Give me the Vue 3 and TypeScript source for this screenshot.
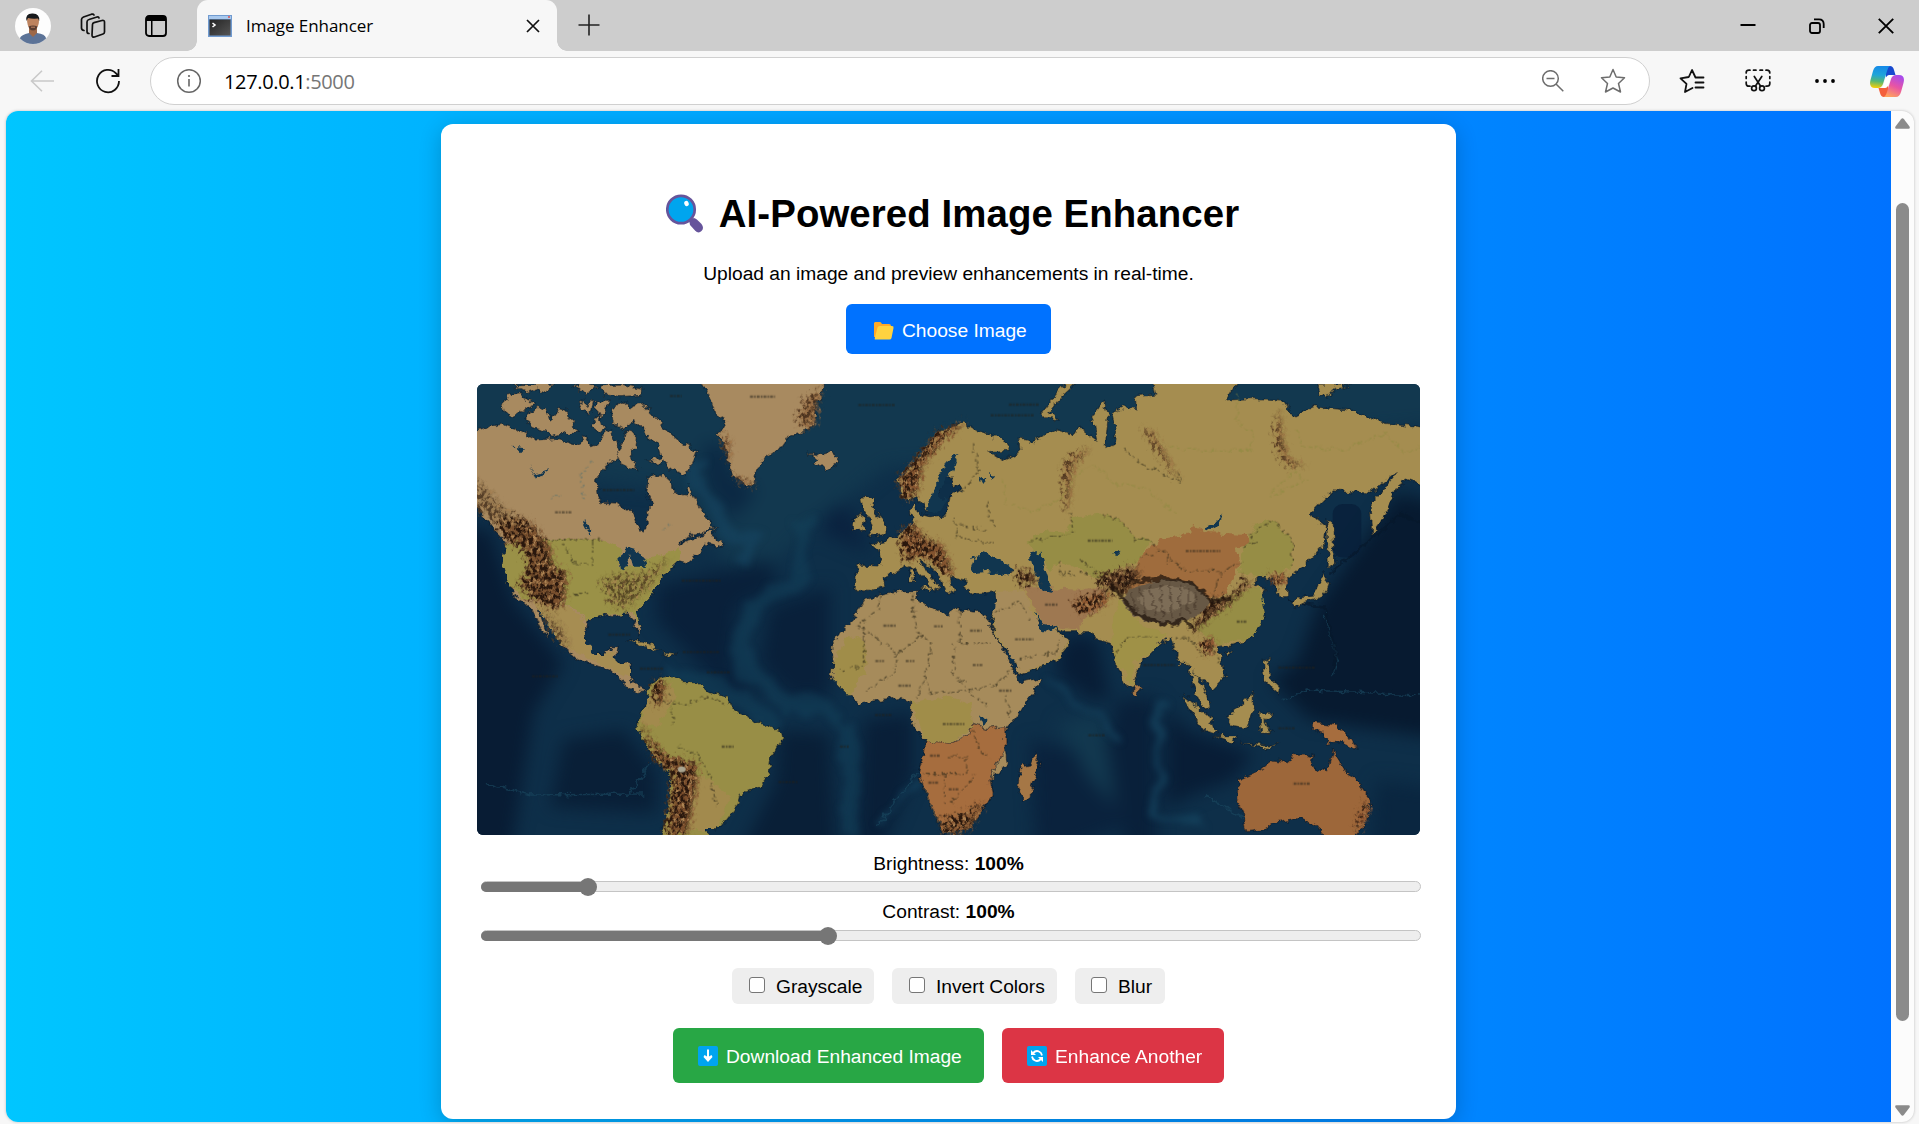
<script setup lang="ts">
import { ref } from 'vue'

interface Slider {
  label: string
  value: number
  fill: number
}

const sliders: Slider[] = [
  { label: 'Brightness', value: 100, fill: 107 },
  { label: 'Contrast', value: 100, fill: 347 },
]
const gray = ref(false)
const invert = ref(false)
const blur = ref(false)

const arctic: string[] = [
  '100,80 112,45 150,38 165,60 195,70 160,92 130,112 105,102',
  '165,105 200,82 230,88 240,120 262,85 290,92 300,118 325,160 285,160 240,172 225,150 190,140 165,120',
  '325,70 345,55 350,75 372,58 362,105 335,92',
  '378,62 418,64 410,85 395,112 378,95',
  '365,140 385,100 402,150 385,155',
  '125,14 250,12 225,40 205,25 170,38',
  '305,18 350,12 380,20 345,45 325,25',
  '388,14 450,12 515,25 512,46 450,50 405,45',
  '425,85 460,65 480,80 515,70 545,100 580,140 630,185 682,215 670,245 650,285 600,270 585,240 560,250 532,240 575,230 565,195 535,180 520,145 490,125 460,145 428,125',
  '465,155 500,160 495,200 480,225 505,268 475,262 450,250 440,215 460,190',
  '1015,220 1040,240 1032,255 1070,270 1100,252 1105,230 1085,215 1050,225',
]

const mapMarks: [number, number, number][] = [
  [840, 50, 75], [600, 48, 35], [1165, 75, 110], [255, 397, 52], [398, 330, 95], [635, 602, 120],
  [186, 889, 78], [638, 816, 110], [755, 1100, 36], [1240, 737, 40], [1392, 739, 26], [1216, 843, 26],
  [1307, 843, 26], [1285, 917, 38], [1380, 1127, 30], [1375, 1208, 30], [1617, 74, 90], [1562, 106, 130],
  [1853, 482, 74], [2147, 513, 104], [1635, 778, 55], [1500, 752, 35], [1508, 855, 32], [1587, 932, 38],
  [1418, 1032, 65], [1436, 1228, 32], [2470, 1211, 50], [2020, 855, 95], [2425, 863, 110], [1855, 1066, 50],
  [510, 866, 70], [710, 877, 72], [415, 764, 65], [1725, 674, 40], [2300, 725, 32], [2425, 1045, 50],
  [1110, 1100, 26], [925, 1206, 60], [1215, 1005, 50],
]
</script>

<template>
  <div class="browser">
    <header class="tabs">
      <svg class="avatar" width="36" height="36" viewBox="0 0 36 36">
        <defs><clipPath id="face"><circle cx="18" cy="18" r="18" /></clipPath></defs>
        <g clip-path="url(#face)">
          <rect width="36" height="36" fill="#fdfdfd" />
          <path d="M5 36V30Q6 27 14 25H22Q30 26 31 30V36Z" fill="#5c7397" />
          <path d="M14 20V25L18 29L22 25V20Z" fill="#9d6848" />
          <path d="M12 11Q12 7 18 7Q24 7 24 12Q24 18 21 21Q18 24 15 21Q12 18 12 11Z" fill="#bd835f" />
          <path d="M11.500 13Q10 5.500 17 5.500Q25 5 24.200 13L23 10.500Q17 11 13 10Z" fill="#17191c" />
          <path d="M13.500 18.500Q18 16.500 22.500 18.500Q21 23 18 22.500Q15 23 13.500 18.500Z" fill="#5a3d31" />
          <path d="M16 19.200H20" stroke="#bc8060" stroke-width="1" />
        </g>
      </svg>
      <svg class="collect" width="26" height="26" viewBox="0 0 26 26" fill="none" stroke="#111" stroke-width="1.700" stroke-linejoin="round" stroke-linecap="round">
        <path d="M12.500 11.500Q12.500 10 14 9.600L22 7.500Q24.500 7 24.500 9V19Q24.500 20.500 23 21L14.500 24Q12 24.500 12 22Z" />
        <path d="M9 20.500Q7 20.500 7 18.500V9Q7 7 9 6.500L17 4Q18.500 3.500 19 5" />
        <path d="M4 17.500Q1.500 17 1.500 15V6.500Q1.500 5 3.500 4L11.500 1.200Q13.500 .8 14 2" />
      </svg>
      <svg class="vertical" width="22" height="22" viewBox="0 0 22 22">
        <rect x="1" y="1" width="20" height="20" rx="3" fill="none" stroke="#000" stroke-width="1.800" />
        <path d="M1 6V4Q1 1 4 1H18Q21 1 21 4V6ZM6 6H7.500V21H6Z" />
      </svg>
      <div class="tab">
        <svg width="24" height="22" viewBox="0 0 24 22">
          <defs><linearGradient id="term" x2="1" y2="1"><stop stop-color="#242424" /><stop offset="1" stop-color="#555" /></linearGradient></defs>
          <rect width="24" height="22" fill="#719bd0" /><rect x="1" y="1" width="22" height="3" fill="#a9c9ee" />
          <circle cx="21" cy="2" r="1" fill="#d55" /><rect x="1.500" y="4.500" width="21" height="16" fill="url(#term)" />
          <path d="M4.500 8L7 10L4.500 12" fill="none" stroke="#fff" stroke-width="1.600" />
        </svg>
        <span class="tab-title">Image Enhancer</span>
        <svg class="tab-close" width="14" height="14" viewBox="0 0 14 14" stroke="#111" stroke-width="1.700"><path d="M1 1L13 13M13 1L1 13" /></svg>
      </div>
      <svg class="plus" width="22" height="22" viewBox="0 0 22 22" stroke="#222" stroke-width="1.600"><path d="M11 .5V21.500M.5 11H21.500" /></svg>
      <div class="window-actions">
        <svg width="16" height="16" viewBox="0 0 16 16"><path d="M.5 7H15.500" stroke="#000" stroke-width="2" /></svg>
        <svg width="16" height="16" viewBox="0 0 16 16" fill="none" stroke="#000" stroke-width="1.800"><rect x="1" y="5" width="10" height="10" rx="2" /><path d="M5 1.300H10Q14.700 1.300 14.700 6V10" /></svg>
        <svg width="16" height="16" viewBox="0 0 16 16" stroke="#000" stroke-width="1.900"><path d="M.8 .8L15.200 15.200M15.200 .8L.8 15.200" /></svg>
      </div>
    </header>

    <nav class="toolbar">
      <svg class="back" width="24" height="22" viewBox="0 0 24 22" fill="none" stroke="#c9c9c9" stroke-width="1.600"><path d="M12 .8L1.500 11L12 21.200M1.500 11H24" /></svg>
      <svg class="reload" width="26" height="26" viewBox="0 0 26 26" fill="none" stroke="#111" stroke-width="1.800"><path d="M24 13A11 11.200 0 1 1 21 5.400L23.500 8M23.500 1V8H16.500" /></svg>
      <div class="address">
        <svg class="info" width="26" height="26" viewBox="0 0 26 26"><circle cx="13" cy="13" r="11.300" fill="none" stroke="#666" stroke-width="1.500" /><path d="M13 11V18.500" stroke="#666" stroke-width="1.600" /><circle cx="13" cy="8" r="1.100" fill="#666" /></svg>
        <span class="url">127.0.0.1<i>:5000</i></span>
        <svg class="lens" width="22" height="22" viewBox="0 0 22 22" fill="none" stroke="#6d6d6d" stroke-width="1.500"><circle cx="8.500" cy="8.500" r="7.800" /><path d="M14 14L21.300 21.300M4.500 8.500H12.500" /></svg>
        <svg class="star" width="26" height="26" viewBox="0 0 26 26" fill="none" stroke="#6d6d6d" stroke-width="1.500" stroke-linejoin="round"><path d="M13 1.500L16.200 9L24.500 9.800L18.500 15.500L20.500 24L13 20L5.500 24L7.500 15.500L1.500 9.800L9.800 9Z" /></svg>
      </div>
      <svg class="favs" width="26" height="26" viewBox="0 0 26 26" fill="none" stroke="#111" stroke-width="1.800" stroke-linejoin="round" stroke-linecap="round"><path d="M16.500 9.500L13 2L9.800 9L1.500 10.300L7.500 15.800L6 24L13.500 20M16.500 9.500H24.500M16.500 14.500H24.500M16.500 19.500H24.500" /></svg>
      <svg class="snip" width="26" height="24" viewBox="0 0 26 24" fill="none" stroke="#111" stroke-width="1.700" stroke-linecap="round">
        <path d="M5 17.200H4Q1.200 17.200 1.200 14.500V13M1.200 9.500V7.500M1.200 4V3.500Q1.200 1.200 4 1.200H5M8.500 1.200H11M15 1.200H17.500M21 1.200H22Q24.800 1.200 24.800 4M24.800 7.500V9.500M24.800 13V14.500Q24.800 17.200 22 17.200H21" />
        <path d="M9.300 7.500L15.500 17M16.800 7.500L10.500 17" /><circle cx="9" cy="19.200" r="2.400" /><circle cx="17" cy="19.200" r="2.400" />
      </svg>
      <svg class="dots" width="22" height="6" viewBox="0 0 22 6"><circle cx="3" cy="3" r="1.900" /><circle cx="11" cy="3" r="1.900" /><circle cx="19" cy="3" r="1.900" /></svg>
      <svg class="copilot" width="34" height="31" viewBox="0 0 34 31">
        <defs>
          <linearGradient id="cpa" x1=".3" x2=".2" y2="1"><stop stop-color="#168be8" /><stop offset=".4" stop-color="#20a5d8" /><stop offset=".68" stop-color="#55b775" /><stop offset="1" stop-color="#ffd000" /></linearGradient>
          <linearGradient id="cpb" x1=".7" x2=".3" y2="1"><stop stop-color="#a64bed" /><stop offset=".5" stop-color="#e854a4" /><stop offset="1" stop-color="#ffa25d" /></linearGradient>
        </defs>
        <path d="M15 0H20Q23 0 24 4L25.500 9H20Q17 9 16 12Z" fill="#1749cf" />
        <path d="M19 31H14Q11 31 10 27L8.500 22H14Q17 22 18 18Z" fill="#f4603c" />
        <path d="M8 0H20Q18 1 17 5L13 18Q11.500 22 8 22H5Q-1.500 22 .5 14L3 5Q4.500 0 8 0Z" fill="url(#cpa)" />
        <path d="M26 31H14Q16 30 17 26L21 13Q22.500 9 26 9H29Q35.500 9 33.500 17L31 26Q29.500 31 26 31Z" fill="url(#cpb)" />
        <path d="M16 11.500Q17 9 20 9H22.500Q21 10 20.500 12.500L18 20Q17 22 14.500 22H11.500Q13 21 13.700 18.500Z" fill="#fff" />
      </svg>
    </nav>

    <div class="viewport">
      <main class="page">
        <section class="card">
          <h1>
            <svg width="38" height="39" viewBox="0 0 38 39"><path d="M23 26L28 24Q30 24 35.500 30Q38.500 34 35.500 37Q32.500 40 29 36.500L24 31Z" fill="#66549b" /><circle cx="15" cy="15.500" r="13.700" fill="#00a5ee" stroke="#66549b" stroke-width="2.700" /><ellipse cx="20.500" cy="9.500" rx="2.200" ry="2.700" fill="#fff" transform="rotate(-20 20.500 9.500)" /></svg>
            <span>AI-Powered Image Enhancer</span>
          </h1>
          <p>Upload an image and preview enhancements in real-time.</p>
          <button class="choose">
            <svg width="20" height="18" viewBox="0 0 20 18"><path d="M1 0H6Q7 0 8 2H15Q17 2 17 4V15H0V1Z" fill="#ffa927" /><path d="M3.500 5.500Q4 4 5.500 4H18Q20 4 19.500 6L17.500 16Q17 17.500 15.500 17.500H1Q.5 17.500 .8 16Z" fill="#ffd23f" /></svg>
            <span>Choose Image</span>
          </button>

          <svg class="map" viewBox="21 12 2829 1353" preserveAspectRatio="none">
            <defs>
              <filter id="soft" color-interpolation-filters="sRGB" filterUnits="userSpaceOnUse" x="-100" y="-100" width="3100" height="1600"><feGaussianBlur stdDeviation="26" /></filter>
              <filter id="haze" color-interpolation-filters="sRGB" filterUnits="userSpaceOnUse" x="-100" y="-100" width="3100" height="1600">
                <feTurbulence type="fractalNoise" baseFrequency=".012" numOctaves="3" seed="2" result="n" />
                <feDisplacementMap in="SourceGraphic" in2="n" scale="70" xChannelSelector="R" yChannelSelector="G" />
                <feGaussianBlur stdDeviation="9" />
              </filter>
              <filter id="coast" color-interpolation-filters="sRGB" filterUnits="userSpaceOnUse" x="0" y="0" width="2880" height="1400">
                <feTurbulence type="fractalNoise" baseFrequency=".045" numOctaves="3" seed="4" result="n" />
                <feDisplacementMap in="SourceGraphic" in2="n" scale="26" xChannelSelector="R" yChannelSelector="G" />
              </filter>
              <filter id="rock" color-interpolation-filters="sRGB" filterUnits="userSpaceOnUse" x="0" y="0" width="2880" height="1400">
                <feTurbulence type="fractalNoise" baseFrequency=".09 .07" numOctaves="3" seed="9" result="n" />
                <feColorMatrix in="n" type="matrix" values="0 0 0 0 .16  0 0 0 0 .09  0 0 0 0 .05  5 0 0 0 -2.100" result="dark" />
                <feColorMatrix in="n" type="matrix" values="0 0 0 0 .68  0 0 0 0 .52  0 0 0 0 .33  0 5 0 0 -2.500" result="pale" />
                <feGaussianBlur in="SourceGraphic" stdDeviation="6" result="s" />
                <feDisplacementMap in="s" in2="n" scale="50" xChannelSelector="R" yChannelSelector="B" result="d" />
                <feComposite in="dark" in2="d" operator="in" result="grain" />
                <feComposite in="pale" in2="d" operator="in" result="light" />
                <feMerge><feMergeNode in="d" /><feMergeNode in="light" /><feMergeNode in="grain" /></feMerge>
              </filter>
            </defs>
            <rect x="21" y="12" width="2829" height="1353" fill="#0e2f49" />
            <g filter="url(#soft)">
              <path d="M-80 -80H2950V130L2200 200L1250 260L1050 420L900 560L780 560L620 330L300 300L-80 220Z" fill="#12384f" />
              <path d="M-80 440L60 450L130 660L280 850L190 1000L120 1440H-80Z" fill="#081c34" />
              <path d="M560 620L760 570L900 540L920 620L800 680L780 850L880 950L760 930L560 720Z" fill="#09203a" />
              <path d="M900 680L1080 620L1080 950L960 950L870 850Z" fill="#09203a" />
              <path d="M280 1080L460 1050L560 1180L560 1300L240 1280Z" fill="#091f37" />
              <path d="M930 1050L1080 1060L1100 1440H800L920 1200Z" fill="#091f37" />
              <path d="M1180 1020L1330 1000L1330 1180L1220 1440H1160Z" fill="#091f38" />
              <path d="M700 190L770 200L780 280L860 330L790 420L710 320Z" fill="#0b2843" />
              <path d="M1060 400L1130 370L1200 520L1060 460Z" fill="#0a223f" />
              <path d="M2780 340L2950 380V1080L2520 1020L2400 900L2480 850L2540 680Z" fill="#071a30" />
              <path d="M1780 770H1880L1920 960L1860 960L1760 880Z" fill="#081d36" />
              <path d="M1940 960L2060 950L2060 1440H1980L1900 1140Z" fill="#09203a" />
              <path d="M2090 980L2150 1050L2350 1120L2290 1200L2150 1250L2090 1290Z" fill="#081d36" />
              <path d="M1680 1080L1850 1120L1990 1330L1700 1440Z" fill="#0a223d" />
              <path d="M2720 1200L2950 1230V1440H2700Z" fill="#0a2640" />
              <path d="M1900 1000L1940 1280L1860 1200L1760 1030Z" fill="#12384f" />
            </g>
            <rect x="2588" y="372" width="86" height="160" rx="30" fill="#08203b" fill-opacity=".85" />
            <g fill="none" stroke="#154560" filter="url(#haze)">
              <path d="M680 240L690 330L760 430L850 480L820 560" stroke-width="44" stroke-opacity=".6" />
              <path d="M580 870L730 920L850 980L930 1045M1000 420L990 590L870 650L815 740L830 870L950 970L1120 1010M1140 1020L1140 1365" stroke-width="50" stroke-opacity=".4" />
              <path d="M2075 950L2060 1300L2190 1330M1720 880L1850 980L1950 1080M1340 1180L1220 1340" stroke-width="18" stroke-opacity=".7" />
            </g>
            <g fill="none" stroke="#1b4a61" stroke-opacity=".6" filter="url(#coast)">
              <path d="M50 1210L180 1245L520 1242M480 1240L540 1150M2850 945L2510 930L2440 960M2590 890L2605 840L2560 700M2380 1350L2210 1250M1220 1340L1340 1180" stroke-width="5" />
              <path d="M2450 660L2560 680L2600 820L2590 880M2580 580L2690 490L2790 400L2850 430" stroke="#06172a" stroke-width="8" />
            </g>

            <g filter="url(#coast)" stroke="#071424" stroke-width="4" stroke-opacity=".5">
              <path fill="#a88a60" d="M12 155L60 138L100 132L150 150L200 180L260 175L330 195L345 165L365 200L390 190L400 160L425 150L440 190L450 230L420 250L400 270L380 300L385 345L400 370L440 372L490 395L500 425L515 455L532 430L530 400L545 370L530 340L535 290L575 283L605 310L615 340L645 345L655 320L680 370L710 410L735 440L700 460L650 470L630 490L660 480L700 465L740 445L725 465L765 490L755 505L705 490L695 515L650 550L625 545L600 570L565 600L550 640L520 670L497 700L512 745L505 765L490 720L470 700L430 710L400 705L355 720L345 760L355 800L375 825L405 825L420 800L445 800L435 845L480 855L480 895L500 920L525 935L500 938L455 905L440 880L400 860L360 850L320 835L275 800L260 760L220 695L205 690L222 735L238 775L210 745L185 690L160 665L135 650L115 610L100 560L108 490L80 460L60 430L12 380Z" />
              <polygon v-for="(shape, i) in arctic" :key="i" :points="shape" fill="#a88a60" />
              <path fill="#a88a60" d="M690 0L720 50L735 100L770 122L745 165L765 200L775 250L790 290L830 318L850 320L860 270L880 235L935 200L960 165L1020 150L1035 110L1030 70L1060 40V0Z" />
              <path fill="#988e46" d="M525 935L560 900L600 890L640 905L680 905L710 935L770 950L790 990L850 1020L900 1040L935 1055L940 1080L905 1130L895 1185L870 1220L810 1245L800 1280L770 1320L740 1352L710 1345L715 1380H570L590 1310L600 1250L600 1180L560 1140L520 1080L500 1040L510 1000L540 960Z" />
              <path fill="#a68b5b" d="M1190 655L1165 690L1150 720L1110 760L1085 800L1090 850L1085 890L1110 920L1165 970L1230 960L1280 950L1300 965L1325 970L1325 1030L1365 1080L1360 1120L1345 1180L1370 1250L1400 1320L1420 1363L1495 1340L1540 1285L1570 1240L1562 1200L1615 1150L1600 1060L1640 1010L1690 940L1717 892L1650 905L1630 870L1590 790L1555 725L1530 695L1450 685L1435 705L1400 690L1340 660L1345 632L1300 632L1235 645Z" />
              <path fill="#a58d50" d="M1155 630L1160 555L1235 558L1225 510L1200 490L1250 485L1310 450L1330 430L1320 390L1335 360L1345 400L1380 410L1430 405L1440 350L1480 325L1450 315L1440 290L1420 300L1400 370L1370 395L1345 350L1305 360L1285 300L1340 240L1400 160L1480 125L1520 150L1600 180L1620 210L1560 215L1600 240L1650 215L1645 175L1690 185L1760 150L1810 165L1825 140L1880 180L1865 110L1900 65L1915 110L1905 205L1935 195L1940 155L1925 100L1960 80L2000 90L1995 50L2060 45L2050 0H2305L2270 60L2350 55L2440 60L2470 110L2530 80L2640 90L2750 130L2870 145V320L2810 300L2780 320L2760 370L2730 430L2705 465L2700 370L2740 330L2780 275L2700 340L2590 330L2520 400L2570 440L2560 500L2500 560L2450 595L2450 650L2425 650L2410 600L2370 590L2350 610L2390 630L2370 650L2385 700L2350 770L2290 795L2240 800L2260 850L2265 890L2230 925L2180 890L2170 870L2200 920L2218 980L2200 985L2170 920L2155 850L2130 850L2100 770L2060 800L2010 850L1990 920L1970 925L1930 830L1920 790L1880 780L1860 755L1780 755L1710 725L1695 715L1710 745L1755 745L1800 785L1760 840L1700 865L1645 885L1635 840L1590 790L1560 730L1580 680L1575 635L1510 642L1480 620L1488 600L1440 590L1455 640L1430 635L1400 575L1345 535L1380 590L1412 620L1390 635L1370 605L1320 560L1240 590L1245 620L1200 635Z" />
              <path fill="#a58d50" d="M1175 350L1210 350L1205 385L1230 415L1255 440L1250 460L1195 468L1210 440L1200 410L1180 385ZM1150 425L1170 400L1190 410L1180 450L1150 455ZM1715 100L1760 40L1790 5L1820 8L1770 55L1740 95L1765 120L1730 115ZM1320 570H1332V607H1320ZM1350 622H1385L1375 635ZM2570 420L2590 430L2590 510L2600 550L2575 565ZM2560 580L2575 610L2560 650L2500 665L2480 685L2465 670L2490 650L2530 645ZM2380 840L2395 835L2400 890L2430 920L2425 940L2385 905ZM2540 12H2650L2590 30L2570 55L2550 45Z" />
              <path fill="#a58d50" d="M2135 945L2170 970L2220 1010L2238 1060L2200 1050L2165 1000ZM2235 1070L2300 1070L2290 1090ZM2270 1010L2310 980L2350 940L2350 990L2330 1045L2290 1040ZM2370 1000L2410 1000L2385 1020L2405 1060L2375 1060ZM470 783L520 783L565 805L535 808L500 790ZM575 815L620 820L600 833ZM2265 815L2285 810L2275 830ZM2310 1090L2400 1095L2430 1085L2390 1105Z" />
              <path fill="#a66d3e" d="M1345 1180L1360 1120L1365 1080L1440 1090L1500 1060L1510 1030L1550 1045L1605 1040V1115L1575 1160L1560 1200L1570 1240L1500 1340L1420 1360Z" />
              <path fill="#a57746" d="M1650 1160L1680 1155L1695 1120L1710 1150L1680 1245L1655 1260L1643 1225ZM1993 910L2012 925L2000 950L1990 940Z" />
              <path fill="#a66d3e" d="M2530 1025L2590 1030L2640 1070L2660 1105L2610 1085L2570 1090L2560 1060L2530 1050Z" />
              <path fill="#9d673a" d="M2305 1200L2370 1170L2410 1140L2460 1145L2470 1120L2530 1130L2525 1160L2570 1175L2590 1105L2620 1170L2650 1190L2700 1260L2690 1320L2650 1380H2570L2540 1340L2490 1315L2410 1330L2380 1350L2330 1355L2320 1300L2300 1260Z" />
            </g>
            <g filter="url(#coast)">
              <path fill="#9a9147" d="M108 490L210 475L400 480L455 510L445 560L490 560L500 545L600 515L630 505L625 545L565 600L550 640L500 690L510 745L490 700L400 705L350 720L320 690L270 660L160 660L115 610L100 560Z" />
              <path fill="#a68d52" d="M190 665L270 660L345 720V770L375 825L405 825L430 805L440 845L480 860V890L400 855L275 795Z" />
              <path fill="#a28a4d" d="M640 1180L720 1200L780 1250L740 1350H650ZM535 950L600 910L620 950L560 1040L510 1030Z" />
              <path fill="#a08d49" d="M1090 850L1130 770L1180 780L1190 860L1140 950L1090 900ZM1325 970L1440 950L1500 970L1510 1040L1440 1090L1365 1080Z" />
              <path fill="#968d45" d="M1670 485L1720 450L1790 455L1810 410L1900 400L1960 430L1990 470L2045 480L2000 550L1930 570L1900 600L1830 570L1770 540L1740 570L1700 520ZM2320 500L2360 430L2410 420L2470 490L2465 565L2380 590L2310 580ZM2170 740L2240 700L2290 640L2370 620L2385 700L2350 770L2240 795Z" />
              <path fill="#9f6c3d" d="M2010 530L2080 475L2150 465L2170 440L2220 460L2330 465L2340 490L2300 500L2310 560L2260 650L2180 660L1990 640L1940 595L2000 570Z" />
              <path fill="#9e7851" d="M1660 620L1740 625L1840 630L1910 620L1900 680L1850 710L1820 750L1720 735Z" />
              <path fill="#a68b5b" d="M1580 640L1660 630L1710 745L1755 750L1795 785L1750 840L1650 880L1570 735Z" />
              <path fill="#9f9147" d="M1925 720L1950 655L2020 740L2090 760L2060 800L1990 850V920L1930 830Z" />
              <path fill="#11364f" d="M1510 530L1540 520L1590 540L1640 575L1590 585L1550 575L1510 580L1500 560ZM1680 520L1715 515L1725 570L1750 635L1710 630L1695 570ZM1430 240L1465 225L1450 270L1410 330L1410 360L1435 355L1400 400L1370 390L1390 330ZM1560 275L1575 290L1565 300ZM1528 290L1550 300L1540 315ZM2208 440L2240 425L2260 400L2245 435L2215 450ZM1930 520L1955 515L1940 535ZM1530 1010L1555 1010L1540 1035ZM445 530L475 505L510 515L530 560L490 560L480 525L465 565L450 575ZM130 200L165 205L150 220ZM175 255L190 285L240 270L195 300ZM335 415L355 430L365 465L350 445ZM1695 695L1720 735L1760 742L1745 755L1710 748Z" />
            </g>
            <g filter="url(#rock)">
              <path fill="#79502e" d="M70 420L150 410L195 440L240 500L250 560L290 575L285 660L260 690L190 660L145 610L175 580L165 510L110 480Z" />
              <path fill="#8d7b40" opacity=".55" d="M390 600L450 585L530 580L600 535L540 620L480 680L430 680Z" />
              <path fill="#8d7046" opacity=".6" d="M21 300L100 380L165 430L90 440L21 380ZM215 690L280 750L300 810L240 750Z" />
              <path fill="#7a4e2c" d="M550 905L585 900L580 960L555 980ZM515 1030L550 1090L590 1130L680 1150L680 1210L650 1365H590L610 1180L555 1140Z" />
              <path fill="#82532f" d="M1285 300L1340 240L1400 160L1490 125L1430 170L1360 250L1340 340L1305 360ZM1290 460L1330 430L1360 470L1420 500L1450 590L1410 570L1370 530L1300 540Z" />
              <path fill="#5f4027" d="M1640 570L1690 580L1700 610L1650 610ZM1880 590L1990 560L2010 580L1970 640L1900 630ZM2170 740L2210 660L2290 650L2320 595L2340 610L2280 670L2220 710L2170 760Z" />
              <path fill="#8e5932" d="M1810 660L1890 640L1920 650L1880 690L1830 700Z" />
              <path fill="#885a34" opacity=".65" d="M1788 390L1778 270L1800 230L1860 205L1808 260L1795 390ZM2430 90L2438 180L2460 240L2510 260L2450 255L2422 210L2417 150ZM2020 140L2050 160L2130 300L2080 240ZM1000 70L1030 40L1055 30L1030 140L980 130ZM750 160L780 180V250L765 210ZM790 285L850 310V325L800 300Z" />
              <path fill="#885a34" d="M1415 1320L1500 1290L1540 1270L1500 1345L1430 1365Z" />
              <path fill="#8d5532" d="M2190 780H2230V820H2200ZM2390 590L2450 585L2430 620ZM2680 1270L2700 1280L2670 1350L2660 1350Z" />
            </g>
            <g filter="url(#coast)">
              <path fill="#675845" d="M1955 660Q1970 625 2030 607Q2110 590 2170 612Q2218 640 2215 675Q2190 710 2150 720Q2110 745 2040 725Q1980 710 1955 660Z" />
              <path fill="#7d6d57" d="M2000 650Q2070 605 2140 622Q2185 640 2165 670Q2110 700 2040 690Q2000 680 2000 650Z" />
              <path d="M1985 640L2000 690M2010 625L2030 705M2040 615L2055 710M2070 612L2080 715M2100 610L2105 710M2130 615V705M2155 620V700M2180 635L2175 690" stroke="#3a2c20" stroke-width="4" stroke-opacity=".55" />
              <path d="M1920 615L1965 660Q1990 715 2105 735L2145 715L2165 745M1960 610Q2020 595 2100 597Q2190 605 2220 665L2290 655" fill="none" stroke="#21160e" stroke-width="11" stroke-opacity=".75" />
            </g>
            <ellipse cx="635" cy="1168" rx="12" ry="9" fill="#aaa591" />
            <g fill="none" stroke="#2c2818" stroke-width="3.500" stroke-dasharray="10 7" stroke-opacity=".65" filter="url(#coast)">
              <path d="M210 477L400 480M365 480V560M280 490L310 550L365 555M310 640H355M600 940L610 1040M560 960L650 975L700 950L770 975M630 1100L690 1130L720 1190L740 1280M1160 735L1285 820L1350 770L1330 700V640M1230 650L1225 690L1165 735M1285 820L1270 880L1190 930M1180 740V860L1110 870M1350 770L1385 790L1365 890L1340 950M1365 890L1380 940L1500 930L1550 980M1470 690V790H1560M1450 790V880L1500 930L1590 910L1640 850M1510 1050L1525 1110L1560 1130M1430 1130H1490V1180H1360M1425 1180V1270M1440 1270L1520 1180M1610 940L1620 1010M1580 700L1650 660L1680 720M1645 835L1760 820L1765 780" />
              <path d="M1510 190L1525 270L1480 330M1455 410L1460 470L1570 490M1470 440L1550 450M1800 400L1810 460L1680 485M1900 400L1960 430L1995 475L2040 480L2140 570L2260 575L2320 540M2010 530L2090 510L2095 550M1765 540V580L1850 580M1830 540L1900 600M2320 500L2355 490L2340 460L2410 420L2470 490L2465 560M1930 830L1975 770L2060 770M2100 770L2160 780L2200 830M2220 800L2250 850M2250 580L2230 650M1550 370L1570 440" />
              <path stroke="#8e8a41" d="M1600 300L1610 370L1680 395L1770 360L1830 270L1880 260L1930 310L2020 320L2120 400M2090 190L2130 210H2340L2350 160L2300 120V40M2400 350L2510 300L2470 280L2400 340M2480 150L2500 200L2620 210L2750 160L2800 220L2850 200" />
              <path d="M1960 210L2030 260L2130 310L2125 270" />
              <path stroke="#60756d" d="M340 360L330 290L370 240M240 360L270 340M580 450L600 430" />
            </g>
            <g stroke="#241f18" stroke-width="7" stroke-opacity=".5" stroke-dasharray="9 3 5 3">
              <path v-for="([x, y, w], i) in mapMarks" :key="i" :d="`M${x} ${y}h${w}`" />
            </g>
          </svg>

          <div v-for="s in sliders" :key="s.label" class="control">
            <div class="control-label">{{ s.label }}: <b>{{ s.value }}%</b></div>
            <div class="track">
              <div class="fill" :style="{ width: s.fill + 'px' }"><span class="thumb"></span></div>
            </div>
          </div>

          <div class="options">
            <label><input v-model="gray" type="checkbox" /><span>Grayscale</span></label>
            <label><input v-model="invert" type="checkbox" /><span>Invert Colors</span></label>
            <label><input v-model="blur" type="checkbox" /><span>Blur</span></label>
          </div>

          <div class="actions">
            <button class="download">
              <svg width="20" height="20" viewBox="0 0 20 20"><rect width="20" height="20" rx="2" fill="#00a4ef" /><path d="M9 3.500H11V10.500L13.500 9L14.500 11L10 16L5.500 11L6.500 9L9 10.500Z" fill="#fff" /></svg>
              <span>Download Enhanced Image</span>
            </button>
            <button class="again">
              <svg width="20" height="20" viewBox="0 0 20 20"><rect width="20" height="20" rx="2" fill="#00a4ef" /><path d="M6 7Q9 4 12 5.500Q14.500 6.500 15 9.500M14 13Q11 16 8 14.500Q5.500 13.500 5 10.500" fill="none" stroke="#fff" stroke-width="1.800" /><path d="M4 4V9H9ZM16 16V11H11Z" fill="#fff" /></svg>
              <span>Enhance Another</span>
            </button>
          </div>
        </section>
      </main>
      <aside class="scrollbar">
        <svg width="15" height="11" viewBox="0 0 15 11"><path d="M6 1.200Q7.500-.6 9 1.200L14.500 8.500Q15.500 10.700 13.500 10.700H1.500Q-.5 10.700 .5 8.500Z" fill="#8b8b8b" /></svg>
        <div class="scroll-thumb"></div>
        <svg class="down" width="15" height="11" viewBox="0 0 15 11"><path d="M6 9.800Q7.500 11.600 9 9.800L14.500 2.500Q15.500 .3 13.500 .3H1.500Q-.5 .3 .5 2.500Z" fill="#8b8b8b" /></svg>
      </aside>
    </div>
  </div>
</template>

<style>
body { margin: 0; overflow: hidden; }
</style>

<style scoped>
* { box-sizing: border-box; }
svg { display: block; flex: none; }
button { border: 0; padding: 0; font: inherit; }
.browser { width: 1919px; height: 1124px; background: #f7f7f7; overflow: hidden; font-family: "Liberation Sans", Arial, sans-serif; color: #000; }
.tabs { height: 51px; background: #cdcdcd; display: flex; align-items: flex-start; }
.avatar { margin: 8px 0 0 15px; }
.collect { margin: 13px 0 0 29px; }
.vertical { margin: 15px 0 0 39px; }
.tab { position: relative; width: 360px; height: 51px; margin-left: 30px; padding: 0 17px 0 11px; display: flex; align-items: center; background: #f7f7f7; border-radius: 11px 11px 0 0; }
.tab::before, .tab::after { content: ""; position: absolute; bottom: 0; width: 10px; height: 10px; }
.tab::before { left: -10px; background: radial-gradient(circle at 0 0, transparent 9.5px, #f7f7f7 10px); }
.tab::after { right: -10px; background: radial-gradient(circle at 100% 0, transparent 9.5px, #f7f7f7 10px); }
.tab-title { margin-left: 14px; font: 17px/24px "Open Sans", sans-serif; letter-spacing: -.05px; white-space: nowrap; }
.tab-close { margin: 1px 0 0 auto; }
.plus { margin: 14px 0 0 21px; }
.window-actions { display: flex; gap: 53px; margin: 18px 25px 0 auto; }
.toolbar { height: 60px; display: flex; align-items: center; }
.back { margin-left: 30px; }
.reload { margin-left: 41px; }
.address { width: 1500px; height: 48px; margin-left: 29px; border: 1.5px solid #d0d0d0; border-radius: 24px; background: #fff; display: flex; align-items: center; }
.info { margin-left: 25px; }
.url { margin: 1px 0 0 22px; font: 20px/26px "Open Sans", sans-serif; letter-spacing: -.35px; }
.url i { font-style: normal; color: #767676; }
.lens { margin-left: auto; }
.star { margin: 0 23px 0 36px; }
.favs { margin-left: 29px; }
.snip { margin-left: 40px; }
.dots { margin-left: 43px; }
.copilot { margin-left: 34px; }
.viewport { width: 1908px; height: 1011px; margin-left: 6px; border-radius: 12px; overflow: hidden; display: flex; background: #fcfcfc; box-shadow: 0 0 3px #bbb; }
.page { width: 1885px; height: 1011px; background: linear-gradient(to right, #00c6ff, #0072ff); }
.card { width: 1015px; height: 995px; margin: 13px 0 0 435px; border-radius: 12px; background: #fff; box-shadow: 0 5px 22px rgba(0, 0, 0, .2); display: flex; flex-direction: column; align-items: center; font-size: 19.2px; line-height: 22px; }
h1 { display: flex; align-items: center; height: 44px; margin: 68px 0 0 8px; font-size: 38.4px; line-height: 44px; letter-spacing: .08px; white-space: nowrap; }
h1 span { margin-left: 15px; }
h1 svg { margin-top: -2px; }
p { margin: 27px 0 0; height: 22px; white-space: nowrap; }
.choose { width: 205px; height: 50px; margin-top: 19px; border-radius: 6px; background: #0072ff; color: #fff; display: flex; align-items: center; padding: 3px 0 0 28px; text-align: left; white-space: nowrap; }
.choose span { margin-left: 8px; }
.map { width: 943px; height: 451px; margin: 30px 0 0; border-radius: 6px; }
.control { width: 940px; margin: 18px 0 0 5px; }
.control-label { height: 22px; margin-right: 5px; text-align: center; }
.track { height: 11px; margin-top: 6px; border: 1px solid #c4c4c4; border-radius: 6px; background: #eee; }
.control + .control { margin-top: 9px; }
.control + .control .track { margin-top: 7px; }
.fill { position: relative; height: 10px; margin: -.5px 0 0 -1px; border-radius: 5px; background: #767676; }
.thumb { position: absolute; right: -9px; top: -4px; width: 18px; height: 18px; border-radius: 50%; background: #767676; }
.options { display: flex; gap: 18px; margin-top: 27px; }
.options label { height: 36px; padding: 1px 0 0 17px; border-radius: 6px; background: #eee; display: flex; align-items: center; white-space: nowrap; }
.options label:nth-child(1) { width: 142px; }
.options label:nth-child(2) { width: 165px; }
.options label:nth-child(3) { width: 90px; padding-left: 16px; }
.options input { appearance: none; width: 16px; height: 16px; margin: 0 11px 3px 0; border: 1px solid #767676; border-radius: 3px; background: #fff; flex: none; }
.actions { display: flex; gap: 18px; margin-top: 24px; color: #fff; }
.actions button { height: 55px; border-radius: 6px; color: #fff; display: flex; align-items: center; padding: 2px 0 0 25px; white-space: nowrap; }
.download { width: 311px; background: #28a745; }
.again { width: 222px; background: #dc3545; }
.actions svg { margin-bottom: 1px; }
.actions span { margin-left: 8px; }
.scrollbar { width: 23px; height: 1011px; display: flex; flex-direction: column; align-items: center; padding-top: 7px; }
.scroll-thumb { width: 13px; height: 818px; margin-top: 74px; border-radius: 7px; background: #8b8b8b; }
.down { margin-top: 84px; }
</style>
